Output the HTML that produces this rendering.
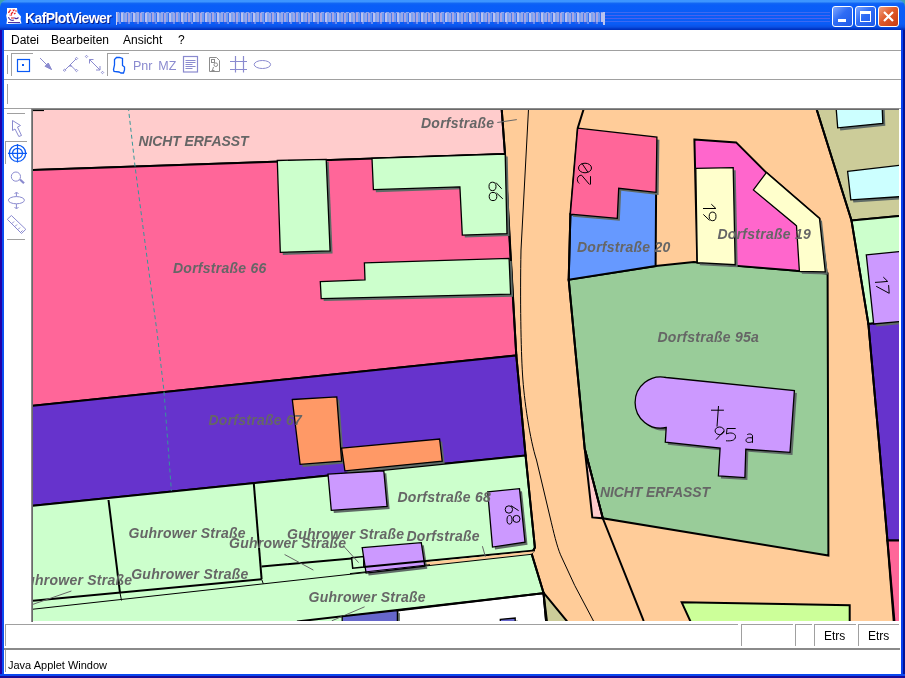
<!DOCTYPE html>
<html><head><meta charset="utf-8">
<style>
*{margin:0;padding:0;box-sizing:border-box}
html,body{width:905px;height:678px;overflow:hidden;background:#3CA0B4;font-family:"Liberation Sans",sans-serif}
.a{position:absolute}
.menu,.st,.tt,svg{will-change:transform}
#title{left:0;top:0;width:905px;height:30px;background:linear-gradient(#3D95FF 0,#3D95FF 2px,#1468F4 3px,#0A5EF8 5px,#0A5CF6 24px,#0A50E4 27px,#0034C4 29px,#0030B8 30px);border-radius:7px 7px 0 0}
#lb{left:0;top:30px;width:4px;height:648px;background:linear-gradient(90deg,#2200A8 0,#2200A8 2px,#0A4CF2 2px,#0A4CF2 4px)}
#rb{left:901px;top:30px;width:4px;height:648px;background:linear-gradient(90deg,#0A40EE 0,#0A40EE 2px,#00129A 2px,#00129A 4px)}
#bb{left:0;top:674px;width:905px;height:4px;background:linear-gradient(#0A48F0 0,#0A48F0 2px,#1A0A96 2px,#1A0A96 4px)}
.tt{left:25px;top:9.5px;color:#fff;font-weight:bold;font-size:14px;letter-spacing:-0.6px;text-shadow:1px 1px 0 #0A1E8C}
.menu{top:33px;font-size:12px;color:#000}
.hl{height:1px;background:#a0a0a0}
.vl{width:1px;background:#a0a0a0}
.btn{width:21px;height:21px;top:6px;border:1px solid #fff;border-radius:3px}
.ic{color:#8a8fd8}
.st{font-size:12px;color:#000}
</style></head><body>
<div class="a" style="left:0;top:7px;width:905px;height:671px;background:#fff"></div>
<div class="a" id="title"></div>
<div class="a" style="left:605px;top:12px;width:225px;height:1px;background:#3C6AF2"></div>
<div class="a" style="left:605px;top:15px;width:225px;height:1px;background:#4A62EE"></div>
<div class="a" style="left:605px;top:18px;width:225px;height:1px;background:#4A62EE"></div>
<div class="a" style="left:605px;top:21px;width:225px;height:1px;background:#3C6AF2"></div>
<div class="a tt">KafPlotViewer</div>
<!-- blurred title part -->
<div class="a" style="left:116px;top:12px;width:489px;height:11px;background:repeating-linear-gradient(90deg,#A9A6E2 0 2px,#6C9CF6 2px 4px,#3A6EF0 4px 5px,#BAC2EE 5px 7px,#7EA2F2 7px 9px,#9AA8E6 9px 11px,#4A7CF2 11px 12px)"></div>
<div class="a" style="left:116px;top:12px;width:489px;height:1px;background:repeating-linear-gradient(90deg,#8CA6F0 0 3px,#3C70F0 3px 5px)"></div>
<div class="a" style="left:116px;top:22px;width:489px;height:2px;background:repeating-linear-gradient(90deg,#2A5AE8 0 3px,#6A8CF0 3px 5px,#0A5CF6 5px 9px)"></div>
<div class="a" style="left:116px;top:12px;width:1px;height:13px;background:#C8D0F0"></div>
<div class="a" style="left:603px;top:12px;width:2px;height:13px;background:#B8C4F0"></div>
<!-- app icon -->
<svg class="a" style="left:0;top:0" width="30" height="30" viewBox="0 0 30 30">
<path d="M7,8 H17 L17.5,12.5 L21,16.5 L20.5,19.5 L21.5,23.5 L6.5,24 L7,19.5 L6.2,15.5 L7,13 Z" fill="#fff"/>
<path d="M8.5,13 l1,-2 1.5,-1 M11,14 l2,-2 M13,11 l1.5,-1.5 M10.5,15.5 l1.5,-1 M14,14 l1.5,-1 M15.5,10.5 l1,1" stroke="#E82020" stroke-width="1.3"/>
<path d="M9,10 h2 M12.5,9.5 h2.5 M9,15 h1" stroke="#FF9090" stroke-width="1"/>
<path d="M8.5,17 C9,20 12,21 14,20 M14.5,17.5 C15,19 17,19 18.5,17.5 M8,22.5 H20" stroke="#5030A0" stroke-width="1.1" fill="none"/>
<path d="M11,18 h3" stroke="#E04040" stroke-width="1.2"/>
</svg>
<div class="a btn" style="left:832px;background:linear-gradient(135deg,#7fa8ff,#2f6cf5 45%,#1f5ae8)"><div class="a" style="left:5px;top:12px;width:8px;height:3px;background:#fff"></div></div>
<div class="a btn" style="left:855px;background:linear-gradient(135deg,#7fa8ff,#2f6cf5 45%,#1f5ae8)"><div class="a" style="left:4px;top:4px;width:11px;height:11px;border:1px solid #fff;border-top-width:3px"></div></div>
<div class="a btn" style="left:878px;background:linear-gradient(135deg,#f0a080,#e05a2a 45%,#c83a10)"><svg class="a" style="left:3px;top:3px" width="13" height="13"><path d="M2 2L11 11M11 2L2 11" stroke="#fff" stroke-width="2.2"/></svg></div>
<div class="a" id="lb"></div>
<div class="a" id="rb"></div>
<div class="a" id="bb"></div>

<!-- menu -->
<div class="a menu" style="left:11px">Datei</div>
<div class="a menu" style="left:51px">Bearbeiten</div>
<div class="a menu" style="left:123px">Ansicht</div>
<div class="a menu" style="left:178px">?</div>
<div class="a hl" style="left:4px;top:50px;width:897px"></div>

<!-- toolbar -->
<svg class="a" style="left:0;top:50px" width="300" height="30" viewBox="0 50 300 30">
<g shape-rendering="crispEdges" fill="#a0a0a0">
<rect x="7" y="55" width="1" height="19"/>
<rect x="11" y="53" width="1" height="23"/><rect x="11" y="53" width="22" height="1"/>
<rect x="107" y="53" width="1" height="23"/><rect x="107" y="53" width="22" height="1"/>
</g>
<rect x="17.5" y="59.5" width="12" height="12" fill="none" stroke="#0A5AF5" stroke-width="1.2"/>
<rect x="22" y="64" width="2" height="2" fill="#0A5AF5"/>
<g stroke="#8A8ACF" fill="none" stroke-width="1">
<path d="M40,58 L51.5,69.5"/>
<path d="M45,66.3 L48.3,63 L51.5,69.5 Z" fill="#8A8ACF"/>
<path d="M65,70 L76,59 M70.3,65 L76,70.5"/>
<path d="M68.5,66.5 L70.3,64.6 L72.3,66.5 Z" fill="#8A8ACF" stroke="none"/>
<path d="M64.5,69 l1.2,1.2 -1.2,1.2 -1.2,-1.2z M76.5,57.3 l1.2,1.2 -1.2,1.2 -1.2,-1.2z M76.5,69.3 l1.2,1.2 -1.2,1.2 -1.2,-1.2z" fill="#fff"/>
<path d="M86.5,55.3 l1.2,1.2 -1.2,1.2 -1.2,-1.2z M102.5,71.3 l1.2,1.2 -1.2,1.2 -1.2,-1.2z" fill="#fff"/>
<path d="M89.5,59.5 L100,70"/>
<path d="M89.5,63.5 L89.5,59.5 L93.5,59.5 M100,66 L100,70 L96,70"/>
</g>
<path d="M116.5,57.5 L119.5,57.5 L122.5,58.5 L122.5,65.5 L124.5,67 L124.5,70 L123.5,73 L121,73 L119,72 L114,71.5 L113.5,69.5 L114.5,65 L114.5,59.5 Z" fill="none" stroke="#0A5AF5" stroke-width="1.3" stroke-linejoin="miter"/>
<g fill="#8A8ACF" font-family="Liberation Sans" font-size="12.5">
<text x="133" y="69.8">Pnr</text>
<text x="158.3" y="69.8">MZ</text>
</g>
<g stroke="#8A8ACF" fill="none" stroke-width="1">
<rect x="183.5" y="56.5" width="14" height="15.5" stroke-width="1.2"/>
<path d="M185.5,60.5 h10 M185.5,62.5 h10 M185.5,64.5 h7 M185.5,66.5 h10 M185.5,68.5 h7"/>
<path d="M235.5,56 v16.5 M243.5,56 v16.5 M230,61.5 h17 M230,69.5 h17" stroke-width="1.2"/>
<ellipse cx="262.4" cy="64.5" rx="8.2" ry="4" />
</g>
<g stroke="#8C8C8C" fill="none" stroke-width="1">
<path d="M209.5,57.5 h7 l3,3 v11 h-10 z"/>
<rect x="211.5" y="59.5" width="3" height="3"/>
<circle cx="215.8" cy="64.7" r="1.8"/>
<path d="M211.5,70.5 h3 M212.5,70 l1,-3"/>
</g>
</svg>
<div class="a hl" style="left:4px;top:79px;width:897px"></div>

<!-- text field row -->
<div class="a vl" style="left:7px;top:84px;height:20px"></div>
<div class="a hl" style="left:4px;top:108px;width:897px"></div>

<!-- left toolbar -->

<svg class="a" style="left:0;top:108px" width="33" height="140" viewBox="0 108 33 140">
<g shape-rendering="crispEdges" fill="#a0a0a0">
<rect x="7" y="113" width="18" height="1"/>
<rect x="5" y="141" width="1" height="23"/><rect x="5" y="141" width="22" height="1"/>
<rect x="7" y="239" width="18" height="1"/>
</g>
<path d="M12.5,120.5 L20.5,125.5 L17.5,127 L21.5,135.5 L18.8,136.5 L15,129 L12.5,130.5 Z" fill="none" stroke="#8A8ACF" stroke-width="1"/>
<g stroke="#0A5AF5" fill="none" stroke-width="1.2">
<circle cx="17.5" cy="153.3" r="8.2"/>
<circle cx="17.5" cy="153.3" r="5"/>
<path d="M8,153.3 h19 M17.5,144 v18.5"/>
</g>
<g stroke="#8A8ACF" fill="none" stroke-width="1">
<circle cx="15.9" cy="176.6" r="4.6"/>
<path d="M20,179.5 L24,183.3" stroke-width="2.2"/>
<ellipse cx="16.4" cy="200.2" rx="8" ry="3.6"/>
<path d="M16.4,192.5 v4 M16.4,204 v4.5 M14.5,194 l2,-2 2,2 M14.5,207 l2,2 2,-2"/>
<path d="M7.3,219.3 L11.4,215.5 L25.8,229.3 L21.5,233.5 Z"/>
<path d="M12,223.5 l2,-2 M15,226.5 l2,-2 M18,229.5 l2,-2 M21,232 l1.5,-1.5"/>
</g>
</svg>


<!-- map -->
<svg class="a" style="left:33px;top:109px" width="866" height="512" viewBox="33 109 866 512">
<rect x="33" y="109" width="866" height="512" fill="#FFCC99"/>
<g stroke="#000" stroke-width="2" stroke-linejoin="miter">
<polygon points="20,100 501,100 505,154 20,170.5" fill="#FFCCCC"/>
<polygon points="20,170.5 505,154 516.3,355.4 20,407" fill="#FF6699"/>
<polygon points="20,407 516.3,355.4 525.6,455.5 20,507" fill="#6633CC"/>
<polygon points="20,507 525.6,455.5 534.9,547.6 531.6,553.6 543.5,592.7 546.9,630 20,630" fill="#CCFFCC"/>
<polygon points="397.4,610.5 543.5,593.2 546.9,630 397.4,630" fill="#FFFFFF"/>
<polygon points="543.5,592.7 566.8,621 569,630 546.9,630" fill="#CCCC99"/>
<polygon points="568.7,279.7 655.6,266.1 693.8,262 827.6,273.3 828.4,555.5 602.8,518.3 584.7,448.7" fill="#99CC99"/>
<polygon points="584.7,448.7 592.3,517.4 602.8,518.3" fill="#FFCCCC"/>
<polygon points="570.4,214.2 617.3,218.3 618.7,188.3 656.1,192.4 655.6,266.1 568.7,279.7" fill="#6699FF"/>
<polygon points="694.4,139.5 736.1,142.4 766.3,172.6 819.5,218.6 826.7,273.3 697.3,262.7" fill="#FF66CC"/>
<polygon points="813.7,100 910,100 910,215 851.5,220.5" fill="#CCCC99"/>
<polygon points="851.5,220.5 910,215 910,319.5 868.4,324" fill="#CCFFCC"/>
<polygon points="868.4,324 910,319.5 910,540.6 887.4,540.6 878.8,440" fill="#6633CC"/>
<polygon points="887.4,540.6 910,540.6 910,630 894.4,630" fill="#FF6699"/>
<polygon points="681.7,602.3 849.7,605.3 849.7,630 694.4,630" fill="#CCFF99"/>
</g>
<g fill="none" stroke="#000">
<path d="M501,100 L505,154 L510.1,250 L516.3,355.4 L525.6,456 L534.9,547.6 L531.6,553.6 L543.5,592.7 L546.9,621" stroke-width="2"/>
<path d="M586.5,100 L577.7,128.2 L570.4,214.2 L568.7,279.7 L584.7,448.7 L602.8,518.3 L643.7,621" stroke-width="2"/>
<path d="M813.7,100 L851.5,220.5 L868.4,324 L878.8,440 L894.4,621" stroke-width="2"/>
<path d="M529,100 L521,250 C520,300 521,350 522.5,374 C524,400 530,440 536.5,460 L551.4,522.8 C555,538 558,550 562,558 L574.7,585.4 L593.5,621" stroke-width="1"/>
<path d="M108.5,500 L120,592.8" stroke-width="2"/><path d="M120,592.8 L121.5,600.5" stroke-width="1"/>
<path d="M253.8,483.3 L261.6,579.2" stroke-width="2"/><path d="M261.6,579.2 L263.3,583.8" stroke-width="1"/>
<path d="M33,600.7 L261.6,579.2" stroke-width="2"/>
<path d="M261.6,566.6 L351.6,558.4 M363.8,567 L534.9,550.5" stroke-width="2"/>
<polygon points="424,562.6 534.9,551.2 531.6,553.8 424,566" fill="#FFCC99" stroke="none"/>
<path d="M33,609.2 L531.6,554.3" stroke-width="1"/>
<path d="M297,621.5 L543.5,593.2" stroke-width="2"/>
<path d="M351.6,557.7 L363.8,556.5 L363.8,567 L352.7,568.2 Z" stroke-width="1.5" fill="none"/>
<g stroke="#666" stroke-width="1">
<path d="M497.3,122.5 L516.8,119.6 M284.6,554.5 L313.4,570.1 M33,604.3 L71.4,591 M331.8,620.8 L364.6,606.8 M482.4,546.2 L485.4,556.7 M343.7,546.2 L358.6,562.6"/>
</g>
</g>
<path d="M33,110.5 H44" stroke="#000" stroke-width="1.2"/>
<path d="M127.4,100 L128.5,109 L135,166 L146,250 L157.1,332.5 L163.9,390.3 L171.4,490.8" stroke="#339999" stroke-width="1" stroke-dasharray="4,3" fill="none"/>

<g fill="#5F6A66">
<polygon points="580.2,130.7 659.4,139.7 658.6,194.9 621.2,190.8 619.8,220.8 572.9,216.7"/>
<polygon points="698.3,170.8 735.7,170.2 737.7,267.2 699.8,265.2"/>
<polygon points="768.8,175.1 822.0,221.1 827.8,274.4 801.9,273.8 799.0,228.3 755.9,192.4"/>
<polygon points="838.0,102.5 884.4,102.5 885.3,125.8 840.2,130.4"/>
<polygon points="850.1,173.8 912.5,166.5 912.5,198.5 853.3,202.4"/>
<polygon points="868.8,257.4 912.5,253.0 912.5,323.0 876.2,326.5"/>
<polygon points="279.8,163.0 328.7,161.8 332.6,253.4 282.8,254.9"/>
<polygon points="374.5,160.9 507.7,156.5 509.5,236.1 464.8,237.6 462.4,189.3 375.9,192.2"/>
<polygon points="366.9,265.3 511.6,260.9 513.1,296.7 323.7,301.1 322.8,284.1 367.5,282.3"/>
<polygon points="294.8,402.0 339.3,399.4 344.1,463.6 302.6,466.9"/>
<polygon points="344.1,450.6 442.1,441.5 444.7,463.6 347.4,473.4"/>
<polygon points="330.5,476.6 386.3,473.3 389.6,509.0 333.8,512.9"/>
<polygon points="490.2,494.4 522.0,491.2 527.5,544.7 495.0,549.6"/>
<polygon points="364.7,550.2 423.8,545.2 427.3,568.7 368.6,575.6"/>
<polygon points="344.7,619.0 399.9,613.1 399.9,632.5 344.7,632.5"/>
<polygon points="502.8,621.8 517.7,620.5 517.7,632.5 502.8,632.5"/>
<path d="M666.2,377.5 L794.4,390.5 L790,452.4 L745.8,449.3 L744.9,477.6 L718.4,475.9 L720.1,448 L665.3,442.2 L666.2,427.5 A25.6,25.6 0 1 1 666.2,377.5 Z" transform="translate(2.5,2.5)"/>
</g>
<g stroke="#000" stroke-width="1.3" stroke-linejoin="miter">
<polygon points="577.7,128.2 656.9,137.2 656.1,192.4 618.7,188.3 617.3,218.3 570.4,214.2" fill="#FF6699"/>
<polygon points="695.8,168.3 733.2,167.7 735.2,264.7 697.3,262.7" fill="#FFFFCC"/>
<polygon points="766.3,172.6 819.5,218.6 825.3,271.9 799.4,271.3 796.5,225.8 753.4,189.9" fill="#FFFFCC"/>
<polygon points="835.5,100 881.9,100 882.8,123.3 837.7,127.9" fill="#CCFFFF"/>
<polygon points="847.6,171.3 910,164 910,196 850.8,199.9" fill="#CCFFFF"/>
<polygon points="866.3,254.9 910,250.5 910,320.5 873.7,324" fill="#CC99FF"/>
<polygon points="277.3,160.5 326.2,159.3 330.1,250.9 280.3,252.4" fill="#CCFFCC"/>
<polygon points="372,158.4 505.2,154 507,233.6 462.3,235.1 459.9,186.8 373.4,189.7" fill="#CCFFCC"/>
<polygon points="364.4,262.8 509.1,258.4 510.6,294.2 321.2,298.6 320.3,281.6 365,279.8" fill="#CCFFCC"/>
<polygon points="292.3,399.5 336.8,396.9 341.6,461.1 300.1,464.4" fill="#FF9966"/>
<polygon points="341.6,448.1 439.6,439 442.2,461.1 344.9,470.9" fill="#FF9966"/>
<polygon points="328,474.1 383.8,470.8 387.1,506.5 331.3,510.4" fill="#CC99FF"/>
<polygon points="487.7,491.9 519.5,488.7 525,542.2 492.5,547.1" fill="#CC99FF"/>
<polygon points="362.2,547.7 421.3,542.7 424.8,566.2 366.1,573.1" fill="#CC99FF"/>
<polygon points="342.2,616.5 397.4,610.6 397.4,630 342.2,630" fill="#6666CC"/>
<polygon points="500.3,619.3 515.2,618 515.2,630 500.3,630" fill="#6666CC"/>
<path d="M666.2,377.5 L794.4,390.5 L790,452.4 L745.8,449.3 L744.9,477.6 L718.4,475.9 L720.1,448 L665.3,442.2 L666.2,427.5 A25.6,25.6 0 1 1 666.2,377.5 Z" fill="#CC99FF"/>
</g>
<path d="M363.8,567 L426,561" stroke="#000" stroke-width="2"/>
<path d="M350,573.6 L430,564.7" stroke="#000" stroke-width="1"/>
<g fill="#666666" font-family="Liberation Sans" font-weight="bold" font-style="italic" font-size="14" letter-spacing="0.25">
<text x="138.5" y="145.7" letter-spacing="-0.1">NICHT ERFASST</text>
<text x="421" y="128.1">Dorfstraße</text>
<text x="173" y="273.2">Dorfstraße 66</text>
<text x="577" y="252.1">Dorfstraße 20</text>
<text x="717.5" y="239.0">Dorfstraße 19</text>
<text x="657.5" y="342.0">Dorfstraße 95a</text>
<text x="208.5" y="425.2">Dorfstraße 67</text>
<text x="397.5" y="501.9">Dorfstraße 68</text>
<text x="600" y="497.4" letter-spacing="-0.1">NICHT ERFASST</text>
<text x="128.5" y="537.8">Guhrower Straße</text>
<text x="131.2" y="578.7">Guhrower Straße</text>
<text x="15" y="585.4">Guhrower Straße</text>
<text x="229" y="548.1">Guhrower Straße</text>
<text x="287" y="538.7">Guhrower Straße</text>
<text x="406.5" y="541.0">Dorfstraße</text>
<text x="308.5" y="601.5">Guhrower Straße</text>
</g>
<g fill="none" stroke="#000" stroke-width="1">
<path d="M496,182.6 L501.7,188.8 M496.5,193 L502.8,198.8 M581.9,163.3 L587.9,172.2 M579.3,183.5 C576,181 577,175 581.6,175.2 L589.5,184.5 M590.5,176.2 L590.5,184.5"/>
<ellipse cx="492.5" cy="186.4" rx="3.5" ry="4.2"/><ellipse cx="493" cy="196.5" rx="3.8" ry="4.1"/>
<ellipse cx="585" cy="168" rx="6.5" ry="4.8"/>
<path d="M703,208.5 H715.9 M711.3,204.2 L715.9,208.5 M703.3,214.4 L709.5,220.3"/>
<ellipse cx="712.6" cy="216.4" rx="3.4" ry="4.3"/>
<path d="M875,282.4 L880.9,282 L887.7,281.4 M883.3,277.1 L887.7,281.4 M876.2,286.3 L889.2,293.3 M888.6,285.1 L889.2,293.3"/>
<circle cx="508.9" cy="509.5" r="3.7"/><path d="M510.9,505.6 L518.6,510.6"/>
<ellipse cx="509.5" cy="519.8" rx="2.5" ry="4.3"/><circle cx="516.5" cy="518.9" r="3.5"/>
<path d="M711,410.2 H723.9 M718.5,406 L717,426.6"/>
<ellipse cx="719.6" cy="430.8" rx="4.5" ry="3.8"/><path d="M724,431 L716,439.6"/>
<path d="M735.7,428.5 H727 L726.5,434 C730,432 735.5,433 735.5,436.5 C735.5,441 730,441 726,440.8"/>
<path d="M747,435 C748,433.5 752.5,433.5 752.5,436 V442.8 M752.5,438 C748,437 746,438.5 746,440.5 C746,442.8 750,443 752.5,441.5"/>
</g>

</svg>


<div class="a" style="left:31px;top:108px;width:868px;height:1px;background:#8c8c8c"></div>
<div class="a" style="left:32px;top:109px;width:867px;height:1px;background:#6a6a6a"></div>
<div class="a" style="left:31px;top:108px;width:1px;height:514px;background:#8c8c8c"></div>
<div class="a" style="left:32px;top:109px;width:1px;height:513px;background:#6a6a6a"></div>
<!-- status -->
<div class="a hl" style="left:5px;top:624px;width:733px"></div>
<div class="a vl" style="left:5px;top:624px;height:22px"></div>
<div class="a hl" style="left:741px;top:624px;width:52px"></div>
<div class="a vl" style="left:741px;top:624px;height:22px"></div>
<div class="a hl" style="left:795px;top:624px;width:17px"></div>
<div class="a vl" style="left:795px;top:624px;height:22px"></div>
<div class="a hl" style="left:814px;top:624px;width:42px"></div>
<div class="a vl" style="left:814px;top:624px;height:22px"></div>
<div class="a hl" style="left:858px;top:624px;width:41px"></div>
<div class="a vl" style="left:858px;top:624px;height:22px"></div>
<div class="a st" style="left:824px;top:629px">Etrs</div>
<div class="a st" style="left:868px;top:629px">Etrs</div>
<div class="a hl" style="left:4px;top:648px;width:896px;height:2px;background:#8a8a8a"></div>
<div class="a vl" style="left:5px;top:650px;height:22px"></div>
<div class="a st" style="left:8px;top:659px;font-size:11px">Java Applet Window</div>
</body></html>
